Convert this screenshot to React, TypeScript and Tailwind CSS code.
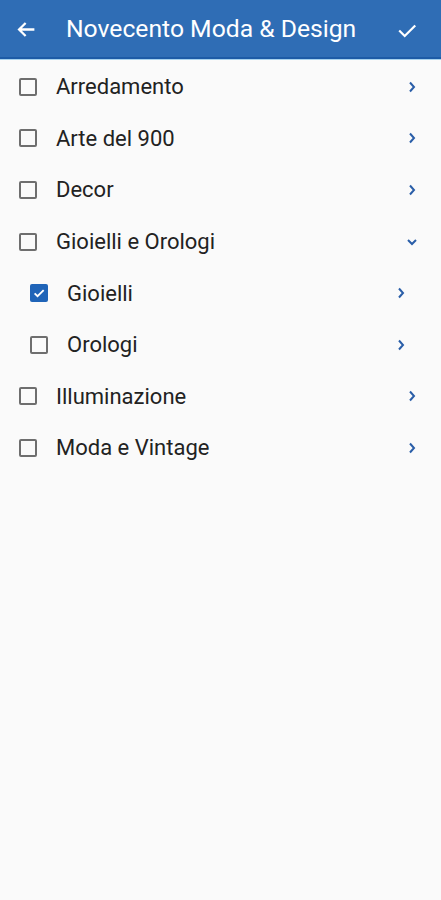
const items = [
  { label: "Arredamento", level: 0, checked: false, open: false },
  { label: "Arte del 900", level: 0, checked: false, open: false },
  { label: "Decor", level: 0, checked: false, open: false },
  { label: "Gioielli e Orologi", level: 0, checked: false, open: true },
  { label: "Gioielli", level: 1, checked: true, open: false },
  { label: "Orologi", level: 1, checked: false, open: false },
  { label: "Illuminazione", level: 0, checked: false, open: false },
  { label: "Moda e Vintage", level: 0, checked: false, open: false },
];

const Checkbox = ({ checked }: { checked: boolean }) =>
  checked ? (
    <div className="flex h-[18px] w-[18px] items-center justify-center rounded-[2px] bg-[#1f64b8]">
      <svg width="14" height="14" viewBox="0 0 24 24" fill="none">
        <path d="M4.5 12.5l5 5L20 7" stroke="white" strokeWidth="3.2" />
      </svg>
    </div>
  ) : (
    <div className="h-[18px] w-[18px] rounded-[2px] border-2 border-[#6e6e6e]" />
  );

const Chevron = ({ open }: { open: boolean }) => (
  <svg width="14" height="14" viewBox="0 0 14 14" fill="none">
    {open ? (
      <path d="M3 5l4 4 4-4" stroke="#2a5ea8" strokeWidth="2" />
    ) : (
      <path d="M5 2.5l4 4.5-4 4.5" stroke="#2a5ea8" strokeWidth="2" />
    )}
  </svg>
);

export default function App() {
  return (
    <div className="flex h-[900px] w-[441px] flex-col bg-[#fafafa] font-['Roboto',sans-serif]">
      <div className="border-b border-[#a9d3ee]">
        <div className="flex h-[59px] items-center border-b-2 border-[#1d5ba6] bg-[#2f6db5] px-4 pt-[2px]">
          <svg width="21" height="21" viewBox="0 0 24 24" fill="none">
            <path d="M21 12H4M11 4.5L3.5 12 11 19.5" stroke="white" strokeWidth="2.6" />
          </svg>
          <h1 className="ml-[29px] flex-1 text-[24.7px] leading-none text-white">
            Novecento Moda &amp; Design
          </h1>
          <svg width="22" height="22" viewBox="0 0 24 24" fill="none" className="mr-[7px]">
            <path d="M3.5 12.5l6 6L21 7" stroke="white" strokeWidth="2.4" />
          </svg>
        </div>
      </div>
      <div className="pt-[1px]">
        {items.map((item) => (
          <div
            key={item.label}
            className={`flex h-[51.6px] items-center ${
              item.level === 1 ? "pl-[30px] pr-[33px]" : "pl-[19px] pr-[22px]"
            }`}
          >
            <Checkbox checked={item.checked} />
            <span className="ml-[19px] flex-1 text-[22px] text-[#222]">
              {item.label}
            </span>
            <Chevron open={item.open} />
          </div>
        ))}
      </div>
    </div>
  );
}
